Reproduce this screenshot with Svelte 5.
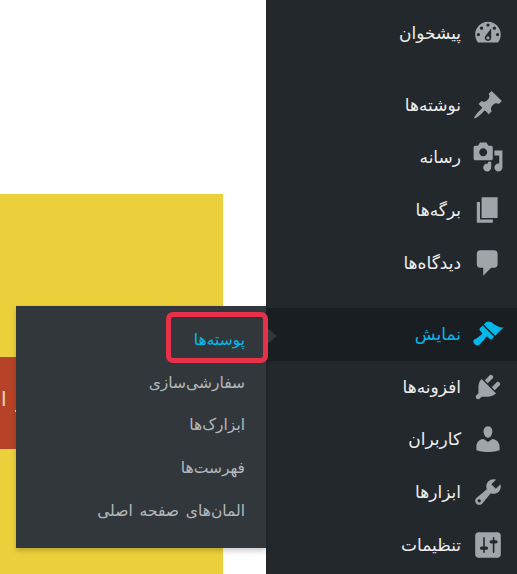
<script>
  const menuTop = [
    { label: 'پیشخوان', d: 'M3.76 16h12.48c1.1-1.37 1.76-3.11 1.76-5 0-4.42-3.58-8-8-8s-8 3.58-8 8c0 1.89.66 3.63 1.76 5zM10 4c.55 0 1 .45 1 1s-.45 1-1 1-1-.45-1-1 .45-1 1-1zM6 6c.55 0 1 .45 1 1s-.45 1-1 1-1-.45-1-1 .45-1 1-1zm8 0c.55 0 1 .45 1 1s-.45 1-1 1-1-.45-1-1 .45-1 1-1zm-5.37 5.55L12 7v6c0 1.1-.9 2-2 2s-2-.9-2-2c0-.57.24-1.08.63-1.45zM4 10c.55 0 1 .45 1 1s-.45 1-1 1-1-.45-1-1 .45-1 1-1zm12 0c.55 0 1 .45 1 1s-.45 1-1 1-1-.45-1-1 .45-1 1-1zm-5 3c0-.55-.45-1-1-1s-1 .45-1 1 .45 1 1 1 1-.45 1-1z' }
  ];
  const menuContent = [
    { label: 'نوشته‌ها', d: 'M10.44 3.02l1.82-1.82 6.36 6.35-1.83 1.82c-1.05-.68-2.48-.57-3.41.36l-.75.75c-.92.93-1.04 2.35-.35 3.41l-1.83 1.82-2.41-2.41-2.8 2.79c-.42.42-3.38 2.71-3.8 2.29s1.86-3.39 2.28-3.81l2.79-2.79L4.1 9.36l1.83-1.82c1.05.69 2.48.57 3.4-.36l.75-.75c.93-.92 1.05-2.35.36-3.41z' },
    { label: 'رسانه', d: 'M13 11V4c0-.55-.45-1-1-1h-1.67L9 1H5L3.67 3H2c-.55 0-1 .45-1 1v7c0 .55.45 1 1 1h10c.55 0 1-.45 1-1zM7 4.5c1.38 0 2.5 1.12 2.5 2.5S8.38 9.5 7 9.5 4.5 8.38 4.5 7 5.62 4.5 7 4.5zM14 6h5v10.5c0 1.38-1.12 2.5-2.5 2.5S14 17.88 14 16.5s1.12-2.5 2.5-2.5c.17 0 .34.02.5.05V9h-3V6zm-4 8.05V13h2v3.5c0 1.38-1.12 2.5-2.5 2.5S7 17.88 7 16.5 8.12 14 9.5 14c.17 0 .34.02.5.05z' },
    { label: 'برگه‌ها', d: 'M6 15V2h10v13H6zm-1 1h8v2H3V5h2v11z' },
    { label: 'دیدگاه‌ها', d: 'M5 2h9c1.1 0 2 .9 2 2v7c0 1.1-.9 2-2 2h-2l-5 5v-5H5c-1.1 0-2-.9-2-2V4c0-1.1.9-2 2-2z' }
  ];
  const menuAdmin = [
    { label: 'نمایش', active: true, d: 'M14.48 11.06L7.41 3.99l1.5-1.5c.5-.56 2.3-.47 3.51.32 1.21.8 1.43 1.28 2.91 2.1 1.18.64 2.45 1.26 4.45.85zm-.71.71L6.7 4.7 4.93 6.47c-.39.39-.39 1.02 0 1.41l1.06 1.06c.39.39.39 1.03 0 1.42-.6.6-1.43 1.11-2.21 1.69-.35.26-.7.53-1.01.84C1.43 13.23.4 14.06 1 15.5c.25.6.77 1.09 1.5 1.5 1.44.6 2.27-.43 3.62-1.78.31-.31.58-.66.84-1.01.58-.78 1.09-1.61 1.69-2.21.39-.39 1.02-.39 1.41 0l1.06 1.06c.39.39 1.02.39 1.41 0z' },
    { label: 'افزونه‌ها', d: 'M13.11 4.36L9.87 7.6 8 5.73l3.24-3.24c.35-.34 1.05-.2 1.56.32.52.51.66 1.21.31 1.55zm-8 1.77l.91-1.12 9.01 9.01-1.19.84c-.71.71-2.63 1.16-3.82 1.16H6.14L4.9 17.26c-.59.59-1.54.59-2.12 0-.59-.58-.59-1.53 0-2.12l1.24-1.24v-3.88c0-1.13.4-3.19 1.09-3.89zm7.26 3.97l3.24-3.24c.34-.35 1.04-.21 1.55.31.52.51.66 1.21.31 1.55l-3.24 3.25z' },
    { label: 'کاربران', d: 'M10 9.25c-2.27 0-2.73-3.44-2.73-3.44C7 4.02 7.82 2 9.97 2c2.16 0 2.98 2.02 2.71 3.81 0 0-.41 3.44-2.68 3.44zm0 2.57L12.72 10c2.39 0 4.52 2.33 4.52 4.53v2.49s-3.65 1.13-7.24 1.13c-3.65 0-7.24-1.13-7.24-1.13v-2.49c0-2.25 1.94-4.48 4.47-4.48z' },
    { label: 'ابزارها', d: 'M16.68 9.77c-1.34 1.34-3.3 1.67-4.95.99l-5.41 6.52c-.99.99-2.59.99-3.58 0s-.99-2.59 0-3.57l6.52-5.42c-.68-1.65-.35-3.61.99-4.95 1.28-1.28 3.12-1.62 4.72-1.06l-2.89 2.89 2.82 2.82 2.86-2.87c.53 1.58.18 3.39-1.08 4.65zM3.81 16.21c.4.39 1.04.39 1.43 0 .4-.4.4-1.04 0-1.43-.39-.4-1.03-.4-1.43 0-.39.39-.39 1.03 0 1.43z' },
    { label: 'تنظیمات', d: 'M18 16V4c0-1.1-.9-2-2-2H4c-1.1 0-2 .9-2 2v12c0 1.1.9 2 2 2h12c1.1 0 2-.9 2-2zM8 11h1c.55 0 1 .45 1 1s-.45 1-1 1H8v1.5c0 .28-.22.5-.5.5s-.5-.22-.5-.5V13H6c-.55 0-1-.45-1-1s.45-1 1-1h1V5.5c0-.28.22-.5.5-.5s.5.22.5.5V11zm5-2h-1c-.55 0-1-.45-1-1s.45-1 1-1h1V5.5c0-.28.22-.5.5-.5s.5.22.5.5V7h1c.55 0 1 .45 1 1s-.45 1-1 1h-1v5.5c0 .28-.22.5-.5.5s-.5-.22-.5-.5V9z' }
  ];
  const groups = [menuTop, menuContent, menuAdmin];
  const submenu = ['پوسته‌ها', 'سفارشی‌سازی', 'ابزارک‌ها', 'فهرست‌ها', 'المان‌های صفحه اصلی'];
</script>

<div class="page">
  <main class="content">
    <div class="card">
      <div class="banner">
        <span class="mark">ا</span>
        <span class="dot"></span>
      </div>
    </div>
  </main>

  <nav class="sidebar" dir="rtl">
    {#each groups as group}
      <ul class="group">
        {#each group as item}
          <li class="row" class:active={item.active}>
            <svg class="icon" viewBox="0 0 20 20" aria-hidden="true"><path d={item.d} /></svg>
            <span>{item.label}</span>
          </li>
        {/each}
      </ul>
    {/each}
  </nav>

  <div class="flyout" dir="rtl">
    <ul>
      {#each submenu as label, i}
        <li class:current={i === 0}>{label}</li>
      {/each}
    </ul>
    <span class="arrow"></span>
    <span class="highlight"></span>
  </div>
</div>

<style>
  :global(body) {
    margin: 0;
    background: #fff;
  }

  .page {
    position: relative;
    display: flex;
    width: 517px;
    height: 574px;
    overflow: hidden;
    font-family: "DejaVu Sans", sans-serif;
  }

  .content {
    flex: 1;
    padding-top: 194px;
  }

  .card {
    width: 223px;
    height: 380px;
    padding-top: 163px;
    box-sizing: border-box;
    background: #ecd03b;
  }

  .banner {
    display: flex;
    align-items: flex-end;
    gap: 8px;
    height: 92px;
    padding: 0 0 37px 1px;
    box-sizing: border-box;
    background: #b64327;
  }

  .mark {
    margin-bottom: 3px;
    color: #f6dcb8;
    font-size: 20px;
    line-height: 20px;
  }

  .dot {
    width: 2px;
    height: 2px;
    background: #f0d8d0;
  }

  .sidebar {
    width: 251px;
    padding-top: 7px;
    background: #23282d;
  }

  ul {
    margin: 0;
    padding: 0;
    list-style: none;
  }

  .group {
    margin-bottom: 19px;
  }

  .row {
    display: flex;
    align-items: center;
    gap: 11px;
    height: 52.6px;
    padding-right: 13px;
    color: #eee;
    font-size: 17px;
  }

  .row.active {
    background: #191e23;
    color: #00b9eb;
  }

  .icon {
    flex: none;
    width: 32px;
    height: 32px;
    fill: #a0a5aa;
  }

  .active .icon {
    fill: #00b9eb;
  }

  .flyout {
    position: absolute;
    left: 16px;
    top: 306px;
    width: 250px;
    height: 242px;
    padding-top: 13px;
    box-sizing: border-box;
    background: #32373c;
    box-shadow: 0 3px 5px rgba(0, 0, 0, 0.2);
  }

  .flyout li {
    height: 42.7px;
    padding-right: 21px;
    color: #b4b9be;
    font-size: 15.5px;
    line-height: 42.7px;
    word-spacing: 2px;
  }

  .flyout li.current {
    color: #00b9eb;
  }

  .arrow {
    position: absolute;
    left: 100%;
    top: 21px;
    border-style: solid;
    border-width: 9px 0 9px 11px;
    border-color: transparent transparent transparent #32373c;
  }

  .highlight {
    position: absolute;
    left: 150px;
    top: 6px;
    width: 102px;
    height: 51px;
    box-sizing: border-box;
    border: 5px solid #e8304a;
    border-radius: 7px;
  }
</style>
